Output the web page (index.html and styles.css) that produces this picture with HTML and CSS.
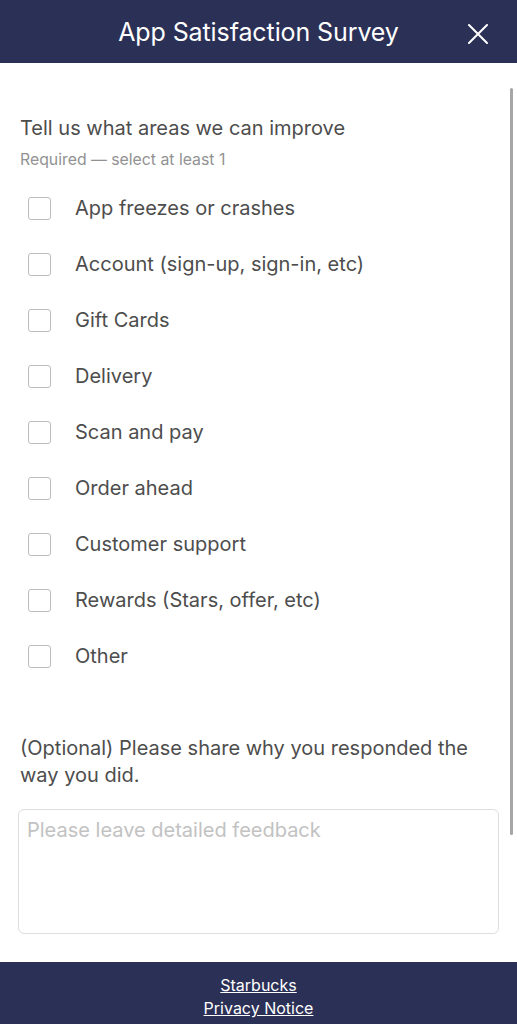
FILE: index.html
```html
<!DOCTYPE html>
<html>
<head>
    <title>App Satisfaction Survey</title>
    <link rel="stylesheet" href="styles.css">
</head>
<body>
    <div class="page">
        <div class="topbar">
            <h1 class="title">App Satisfaction Survey</h1>
            <button class="close" aria-label="Close">
                <svg width="20" height="20" viewBox="0 0 20 20">
                    <path d="M1 1 L19 19 M19 1 L1 19" stroke="#fff" stroke-width="2" stroke-linecap="round" fill="none"/>
                </svg>
            </button>
        </div>

        <div class="content">
            <p class="question">Tell us what areas we can improve</p>
            <p class="hint">Required — select at least 1</p>

            <div class="options">
                <label class="option"><input type="checkbox"> <span>App freezes or crashes</span></label>
                <label class="option"><input type="checkbox"> <span>Account (sign-up, sign-in, etc)</span></label>
                <label class="option"><input type="checkbox"> <span>Gift Cards</span></label>
                <label class="option"><input type="checkbox"> <span>Delivery</span></label>
                <label class="option"><input type="checkbox"> <span>Scan and pay</span></label>
                <label class="option"><input type="checkbox"> <span>Order ahead</span></label>
                <label class="option"><input type="checkbox"> <span>Customer support</span></label>
                <label class="option"><input type="checkbox"> <span>Rewards (Stars, offer, etc)</span></label>
                <label class="option"><input type="checkbox"> <span>Other</span></label>
            </div>

            <p class="question optional">(Optional) Please share why you responded the way you did.</p>
            <textarea class="feedback" placeholder="Please leave detailed feedback"></textarea>

            <div class="scrollbar"></div>
        </div>

        <div class="footer">
            <a href="#">Starbucks</a>
            <a href="#">Privacy Notice</a>
        </div>
    </div>
</body>
</html>
```

FILE: styles.css
```css
body {
    margin: 0;
    font-family: Inter, "Liberation Sans", sans-serif;
    background-color: #fff;
}
.page {
    display: flex;
    flex-direction: column;
    height: 100vh;
}
.topbar {
    height: 63px;
    flex-shrink: 0;
    background-color: #2b3056;
    display: flex;
    align-items: center;
    justify-content: center;
    position: relative;
}
.title {
    margin: 0;
    color: #fff;
    font-size: 25px;
    font-weight: 400;
    letter-spacing: -0.1px;
}
.close {
    position: absolute;
    right: 29px;
    top: 24px;
    padding: 0;
    border: none;
    background: none;
    width: 20px;
    height: 20px;
    cursor: pointer;
}
.close svg {
    display: block;
}
.content {
    flex: 1;
    position: relative;
    overflow: hidden;
    padding: 51px 20px 0 20px;
}
.question {
    margin: 0 0 8px 0;
    font-size: 20px;
    line-height: 28px;
    color: #4d4d4d;
}
.hint {
    margin: 0 0 10px 0;
    font-size: 15.8px;
    line-height: 20px;
    color: #929292;
}
.options {
    display: flex;
    flex-direction: column;
}
.option {
    display: flex;
    align-items: center;
    gap: 24px;
    height: 56px;
    padding-left: 8px;
    font-size: 20px;
    color: #4d4d4d;
}
.option input {
    appearance: none;
    -webkit-appearance: none;
    margin: 0;
    width: 23px;
    height: 23px;
    border: 1.5px solid #bdbdbd;
    border-radius: 3px;
    background-color: #fff;
    flex-shrink: 0;
}
.optional {
    margin: 51px 0 20px 0;
    line-height: 27px;
    padding-right: 20px;
}
.feedback {
    display: block;
    box-sizing: border-box;
    width: 481px;
    height: 125px;
    margin-left: -2px;
    padding: 8px;
    border: 1px solid #dedede;
    border-radius: 6px;
    font-family: Inter, "Liberation Sans", sans-serif;
    font-size: 20px;
    line-height: 24px;
    resize: none;
}
.feedback::placeholder {
    color: #c2c2c2;
}
.scrollbar {
    position: absolute;
    right: 4px;
    top: 25px;
    width: 3px;
    height: 747px;
    border-radius: 2px;
    background-color: #a6a6a6;
}
.footer {
    height: 62px;
    flex-shrink: 0;
    box-sizing: border-box;
    padding-top: 12px;
    background-color: #2b3056;
    display: flex;
    flex-direction: column;
    align-items: center;
}
.footer a {
    color: #fff;
    font-size: 16px;
    line-height: 23px;
    text-decoration: underline;
}
```
